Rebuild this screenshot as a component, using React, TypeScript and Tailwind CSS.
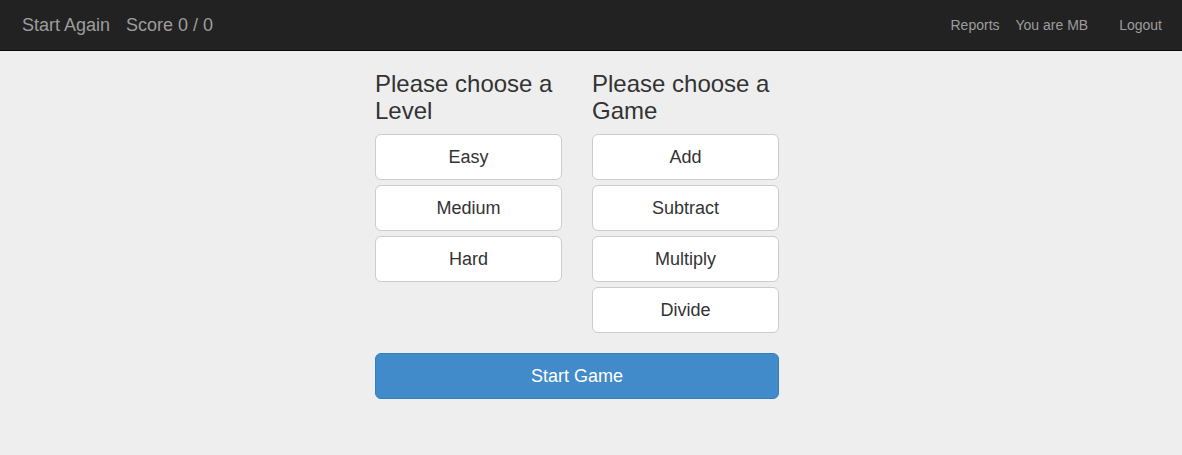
const levels = ["Easy", "Medium", "Hard"]
const games = ["Add", "Subtract", "Multiply", "Divide"]

function ChoiceButton({ label }: { label: string }) {
  return (
    <button className="h-[46px] w-full rounded-[6px] border border-[#ccc] bg-white text-[18px] text-[#333] leading-[24px]">
      {label}
    </button>
  )
}

function Column({ title, items }: { title: string; items: string[] }) {
  return (
    <div>
      <h2 className="text-[24px] leading-[26.5px] text-[#333] mb-[10px]">{title}</h2>
      <div className="flex flex-col gap-[5px]">
        {items.map((item) => (
          <ChoiceButton key={item} label={item} />
        ))}
      </div>
    </div>
  )
}

export default function App() {
  return (
    <div className="min-h-[455px] bg-[#eeeeee] font-['Liberation_Sans',Arial,sans-serif]">
      <nav className="h-[51px] bg-[#222] border-b border-[#080808] flex items-center justify-between pl-[22px] pr-[20px]">
        <div className="flex items-center gap-[16px] text-[18px] text-[#9d9d9d]">
          <span>Start Again</span>
          <span>Score 0 / 0</span>
        </div>
        <div className="flex items-center text-[14px] text-[#9d9d9d]">
          <span>Reports</span>
          <span className="ml-[16px]">You are MB</span>
          <span className="ml-[31px]">Logout</span>
        </div>
      </nav>

      <main className="flex justify-center pt-[20px] pr-[28px]">
        <div className="w-[404px]">
          <div className="grid grid-cols-2 gap-x-[30px]">
            <Column title="Please choose a Level" items={levels} />
            <Column title="Please choose a Game" items={games} />
          </div>
          <button className="mt-[20px] h-[46px] w-full rounded-[6px] border border-[#357ebd] bg-[#428bca] text-[18px] text-white">
            Start Game
          </button>
        </div>
      </main>
    </div>
  )
}
